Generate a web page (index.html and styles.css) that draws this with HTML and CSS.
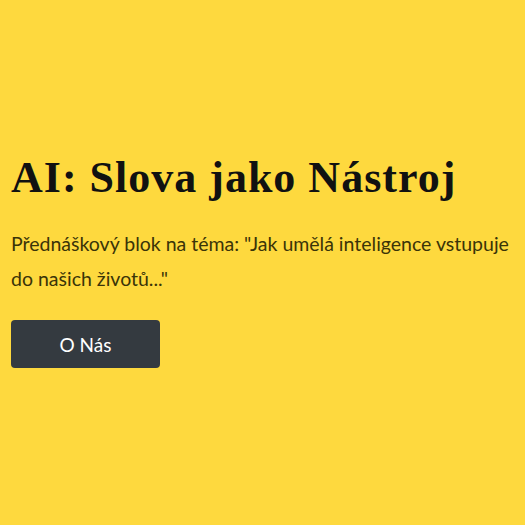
FILE: index.html
```html
<!DOCTYPE html>
<html lang="cs">
<head>
<meta charset="utf-8">
<link rel="stylesheet" href="styles.css">
</head>
<body>
<main class="hero">
  <h1 class="title">AI: Slova jako Nástroj</h1>
  <p class="lead">Přednáškový blok na téma: "Jak umělá inteligence vstupuje do našich životů..."</p>
  <a class="btn" href="#">O Nás</a>
</main>
</body>
</html>
```

FILE: styles.css
```css
html, body {
  margin: 0;
  padding: 0;
  background: #fed93e;
}
body {
  height: 525px;
}
.hero {
  height: 525px;
  box-sizing: border-box;
  display: flex;
  flex-direction: column;
  align-items: flex-start;
  padding: 152px 11px 0;
}
.title {
  margin: 0 0 22px;
  font-family: "Liberation Serif", serif;
  font-weight: bold;
  font-size: 44px;
  line-height: 52px;
  letter-spacing: 1px;
  color: #111;
}
.lead {
  margin: 0 0 24px;
  font-family: Lato, sans-serif;
  font-size: 19.5px;
  line-height: 35px;
  color: #3a3408;
}
.btn {
  display: flex;
  align-items: center;
  justify-content: center;
  width: 149px;
  height: 48px;
  box-sizing: border-box;
  background: #343a40;
  color: #fff;
  border-radius: 4px;
  font-family: Lato, sans-serif;
  font-size: 19px;
  text-decoration: none;
}
```
